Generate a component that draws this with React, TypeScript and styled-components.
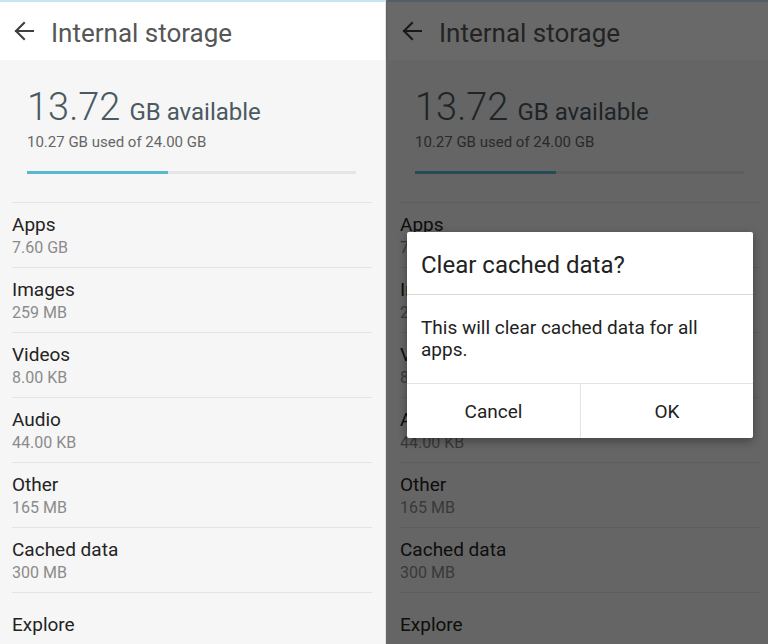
import React from 'react';
import styled, { createGlobalStyle } from 'styled-components';

const GlobalStyle = createGlobalStyle`
  html, body {
    margin: 0;
    padding: 0;
    background: #ffffff;
  }
  body {
    font-family: Roboto, "Noto Sans", "Liberation Sans", sans-serif;
    -webkit-font-smoothing: antialiased;
  }
`;

const items = [
  { name: 'Apps', size: '7.60 GB' },
  { name: 'Images', size: '259 MB' },
  { name: 'Videos', size: '8.00 KB' },
  { name: 'Audio', size: '44.00 KB' },
  { name: 'Other', size: '165 MB' },
  { name: 'Cached data', size: '300 MB' },
];

const used = 10.27;
const total = 24.0;

const Page = styled.div`
  display: flex;
  width: 768px;
  height: 644px;
  overflow: hidden;
`;

const LeftPanel = styled.div`
  width: 385px;
  height: 100%;
  flex-shrink: 0;
  background: #f6f6f6;
  border-right: 1px solid #e2e2e2;
  overflow: hidden;
`;

const RightPanel = styled.div`
  position: relative;
  flex: 1;
  height: 100%;
  background: #f6f6f6;
  overflow: hidden;
`;

/* the dim layer sits over the whole screen behind the dialog */
const Scrim = styled.div`
  position: absolute;
  inset: 0;
  background: rgba(0, 0, 0, 0.59);
`;

const ScreenWrap = styled.div<{ $shift?: number }>`
  width: 385px;
  margin-left: ${(p) => p.$shift || 0}px;
  display: flex;
  flex-direction: column;
`;

const TopBar = styled.header`
  height: 60px;
  box-sizing: border-box;
  border-top: 2px solid #c7e5f0;
  background: #ffffff;
  display: flex;
  align-items: center;
  padding-left: 14px;
  gap: 17px;
`;

const BarTitle = styled.h1`
  margin: 4px 0 0;
  font-size: 26px;
  font-weight: 400;
  color: #565656;
  letter-spacing: 0;
`;

const Summary = styled.section`
  padding: 25px 29px 28px 27px;
`;

const Available = styled.div`
  display: flex;
  align-items: baseline;
  gap: 9px;
  height: 44px;
  color: #4b5961;
`;

const BigNumber = styled.span`
  font-size: 38px;
  line-height: 44px;
  font-weight: 300;
`;

const Unit = styled.span`
  font-size: 24px;
  font-weight: 400;
`;

const UsedText = styled.div`
  margin-top: 4px;
  font-size: 15px;
  line-height: 18px;
  color: #666666;
`;

const Track = styled.div`
  margin-top: 20px;
  height: 3px;
  background: #e5e5e5;
`;

const Fill = styled.div`
  height: 100%;
  background: #5ab7d2;
`;

const List = styled.div`
  display: flex;
  flex-direction: column;
`;

const Row = styled.div<{ $section?: boolean }>`
  margin: 0 13px 0 12px;
  height: 65px;
  box-sizing: border-box;
  border-top: 1px solid #e4e4e4;
  padding-top: ${(p) => (p.$section ? 21 : 11)}px;
`;

const RowTitle = styled.div`
  font-size: 19px;
  line-height: 22px;
  color: #232323;
`;

const RowSub = styled.div`
  margin-top: 2px;
  font-size: 16px;
  line-height: 20px;
  color: #8b8b8b;
`;

const Dialog = styled.div`
  position: absolute;
  left: 21px;
  top: 232px;
  width: 346px;
  background: #ffffff;
  border-radius: 2px;
  box-shadow: 0 3px 10px rgba(0, 0, 0, 0.35);
  display: flex;
  flex-direction: column;
`;

const DialogTitle = styled.div`
  height: 63px;
  box-sizing: border-box;
  border-bottom: 1px solid #dadada;
  padding: 3px 14px 0;
  display: flex;
  align-items: center;
  font-size: 24px;
  color: #222222;
`;

const DialogBody = styled.div`
  height: 88px;
  box-sizing: border-box;
  padding: 0 14px;
  display: flex;
  align-items: center;
  font-size: 19px;
  line-height: 22px;
  color: #222222;
`;

const Actions = styled.div`
  display: grid;
  grid-template-columns: 1fr 1fr;
  height: 54px;
  border-top: 1px solid #e3e3e3;
`;

const ActionButton = styled.button`
  border: none;
  background: transparent;
  font-family: inherit;
  font-size: 19px;
  color: #222222;
  padding: 0;
  & + & {
    border-left: 1px solid #e3e3e3;
  }
`;

const BackArrow = () => (
  <svg width="20" height="20" viewBox="0 0 20 20" fill="none">
    <path
      d="M19 10H2M10 2L2 10l8 8"
      stroke="#3e3e3e"
      strokeWidth="2.1"
      strokeLinecap="square"
    />
  </svg>
);

const StorageScreen = ({ shift }: { shift?: number }) => (
  <ScreenWrap $shift={shift}>
    <TopBar>
      <BackArrow />
      <BarTitle>Internal storage</BarTitle>
    </TopBar>
    <Summary>
      <Available>
        <BigNumber>13.72</BigNumber>
        <Unit>GB available</Unit>
      </Available>
      <UsedText>10.27 GB used of 24.00 GB</UsedText>
      <Track>
        <Fill style={{ width: `${(used / total) * 100}%` }} />
      </Track>
    </Summary>
    <List>
      {items.map((it) => (
        <Row key={it.name}>
          <RowTitle>{it.name}</RowTitle>
          <RowSub>{it.size}</RowSub>
        </Row>
      ))}
      <Row $section>
        <RowTitle>Explore</RowTitle>
      </Row>
    </List>
  </ScreenWrap>
);

export default function App() {
  return (
    <>
      <GlobalStyle />
      <Page>
        <LeftPanel>
          <StorageScreen />
        </LeftPanel>
        <RightPanel>
          <StorageScreen shift={2} />
          <Scrim />
          <Dialog>
            <DialogTitle>Clear cached data?</DialogTitle>
            <DialogBody>This will clear cached data for all apps.</DialogBody>
            <Actions>
              <ActionButton>Cancel</ActionButton>
              <ActionButton>OK</ActionButton>
            </Actions>
          </Dialog>
        </RightPanel>
      </Page>
    </>
  );
}
